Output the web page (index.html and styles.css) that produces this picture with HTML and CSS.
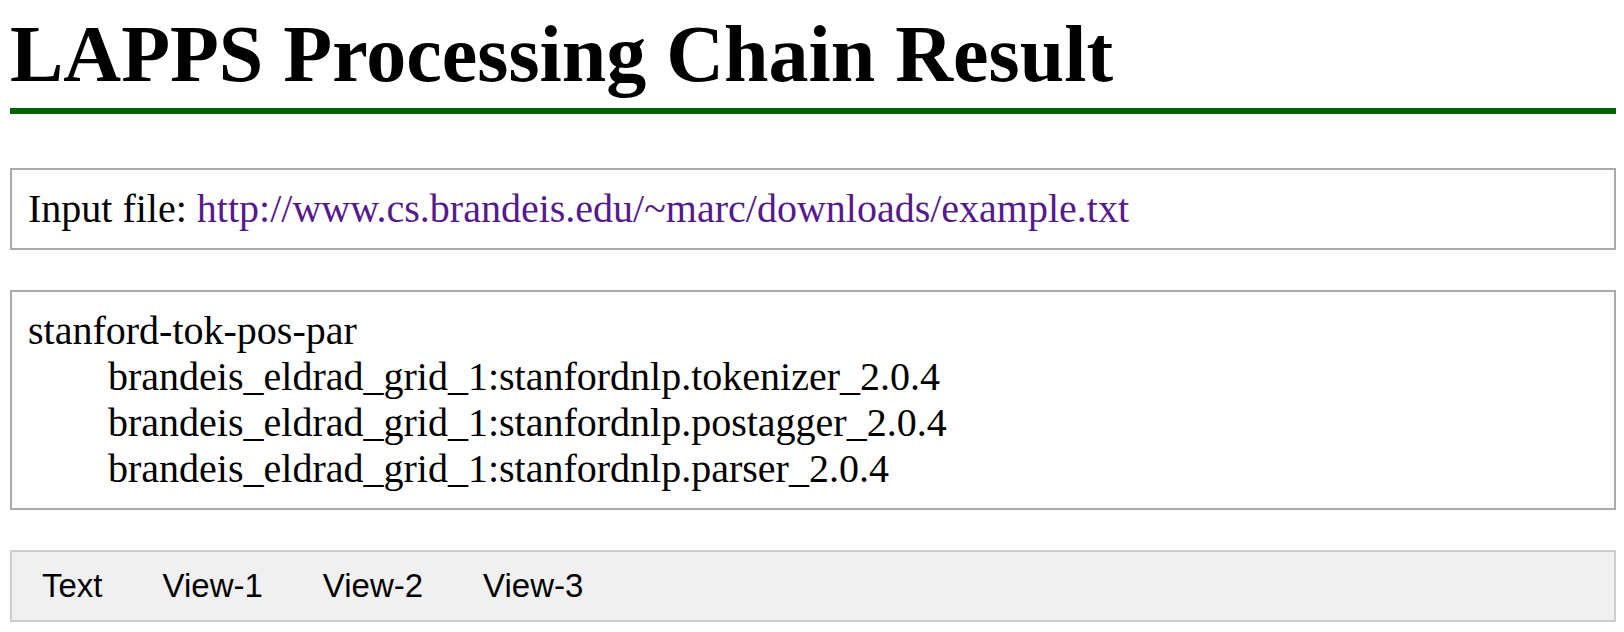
FILE: index.html
```html
<!DOCTYPE html>
<html>
<head>
<meta charset="utf-8">
<title>LAPPS Processing Chain Result</title>
<link rel="stylesheet" href="styles.css">
</head>
<body>
<h1 class="title">LAPPS Processing Chain Result</h1>
<div class="box input-box">Input file: <a class="file-link" href="#">http://www.cs.brandeis.edu/~marc/downloads/example.txt</a></div>
<div class="box chain-box">
  <div class="chain-name">stanford-tok-pos-par</div>
  <div class="chain-step">brandeis_eldrad_grid_1:stanfordnlp.tokenizer_2.0.4</div>
  <div class="chain-step">brandeis_eldrad_grid_1:stanfordnlp.postagger_2.0.4</div>
  <div class="chain-step">brandeis_eldrad_grid_1:stanfordnlp.parser_2.0.4</div>
</div>
<div class="tabs">
  <span class="tab">Text</span>
  <span class="tab">View-1</span>
  <span class="tab">View-2</span>
  <span class="tab">View-3</span>
</div>
</body>
</html>
```
FILE: styles.css
```css
html, body {
  background: #ffffff;
}
body {
  margin: 8px 8px 8px 10px;
  font-family: "Liberation Serif", "Times New Roman", serif;
  color: #000000;
}
.title {
  margin: 0 0 54px 0;
  padding-bottom: 8px;
  font-size: 80px;
  font-weight: bold;
  line-height: 92px;
  border-bottom: 6px solid #006400;
}
.box {
  border: 2px solid #aaaaaa;
  padding: 16px;
  font-size: 40px;
  line-height: 46px;
  margin-bottom: 40px;
}
.file-link {
  color: #551a8b;
  text-decoration: none;
}
.chain-step {
  padding-left: 80px;
}
.tabs {
  display: flex;
  background: #f0f0f0;
  border: 2px solid #cccccc;
  padding: 15px 0 15px 0;
  font-family: "Liberation Sans", Arial, sans-serif;
  font-size: 33px;
  line-height: 38px;
}
.tab {
  padding: 0 30px;
}
```
